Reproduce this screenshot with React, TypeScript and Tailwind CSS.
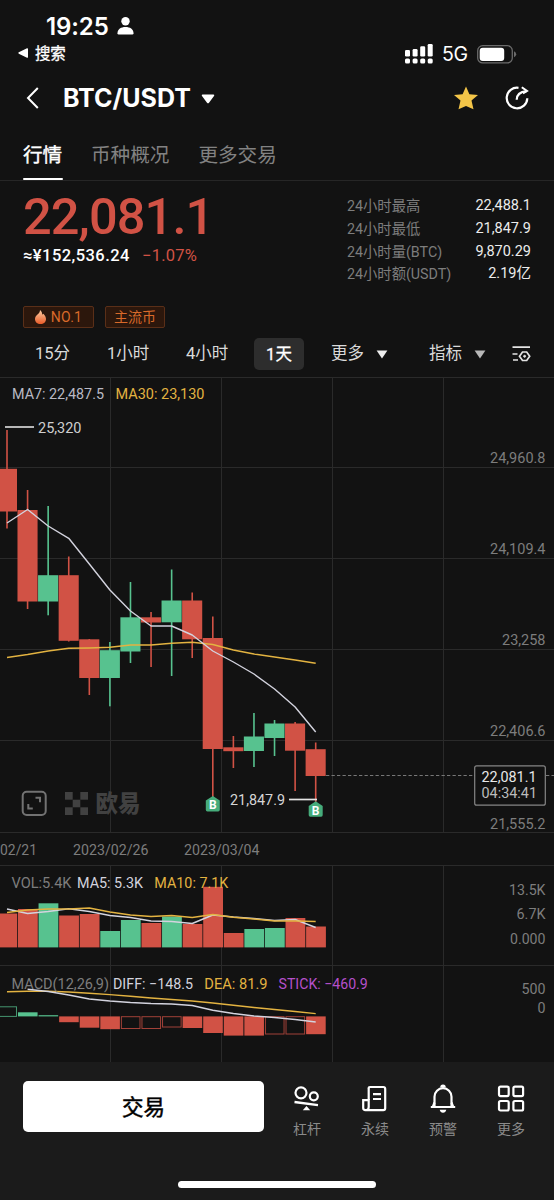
import React from "react";

const RED = "#d15245";
const GREEN = "#57c28f";
const YELLOW = "#e3b341";
const PALE = "#d3d3de";
const GRID = "#2a2a2a";
const GRID_X = [110.5, 221.5, 332.5, 443.5];

const centre = (i: number) => 7 + i * 20.58;

type Candle = [up: boolean, top: number, bottom: number, high: number, low: number];

const candles: Candle[] = [
  [false, 468.8, 511.5, 430, 528.5],
  [false, 510, 601.5, 490, 609],
  [true, 575.2, 601.5, 506, 615.3],
  [false, 575.2, 640.8, 556.5, 641.5],
  [false, 639.3, 678, 639, 695],
  [true, 650.2, 678, 642, 706.3],
  [true, 617.3, 651.5, 582, 663],
  [false, 617.3, 622.5, 612, 667],
  [true, 600.5, 622.3, 569.5, 676],
  [false, 600.5, 639.3, 592.5, 658],
  [false, 638, 749, 616.5, 797],
  [false, 747.3, 751.2, 736, 768],
  [true, 736.5, 751, 713, 767],
  [true, 723.5, 738, 720, 756],
  [false, 723.5, 750.7, 722, 791],
  [false, 749.2, 776, 742.5, 802],
];
const ma7 = [523, 509.5, 526, 538.3, 564, 590, 611, 626, 626, 635, 651, 662, 674, 689, 707, 732];
const ma30 = [657.5, 654.5, 651, 648.3, 648, 647.3, 645, 645, 643.3, 642.3, 644.5, 650, 654, 657, 660, 663.3];

const volumes = [913.5, 909, 903.3, 915.5, 914, 931, 920, 923, 916.5, 924, 886.8, 933, 929, 928, 918, 926.5];
const volMa5 = [909, 913.5, 911.5, 908.8, 911.5, 915.5, 917.5, 921, 921.5, 923.5, 915, 917, 918.5, 920.5, 919.5, 927.5];
const volMa10 = [912.5, 910, 909, 909, 908, 912, 915, 916.5, 915.5, 917.5, 914.5, 917.3, 919, 921, 921, 921.5];

type Stick = [end: number, hollow: boolean];
const sticks: Stick[] = [
  [1006.5, true], [1012.3, false], [1015.2, false], [1022.2, false],
  [1027.7, false], [1029.2, false], [1028.5, true], [1028.5, true],
  [1027, true], [1028, false], [1033, false], [1035.6, false],
  [1035.6, false], [1034, true], [1034, true], [1034.2, false],
];
const diff = [989.3, 991.5, 995, 999, 1001, 1002.5, 1003.5, 1004, 1005.5, 1010.3, 1013.5, 1016, 1017.5, 1019.5, 1022];
const dea = [991.7, 991.3, 991.3, 992, 993.2, 994.6, 996.2, 998, 999.5, 1001, 1003, 1005.3, 1007.5, 1009.5, 1011.5, 1013.6];

function Line({ ys, color, from = 0 }: { ys: number[]; color: string; from?: number }) {
  return (
    <polyline
      points={ys.map((y, i) => `${centre(i + from)},${y}`).join(" ")}
      fill="none"
      stroke={color}
      strokeWidth="1.4"
      strokeLinejoin="round"
    />
  );
}

function Label({ x, y, w, color = "#7d7d7d", size = 14.5, children }: {
  x: number; y: number; w: number; color?: string; size?: number; children: string;
}) {
  return (
    <text x={x} y={y} textLength={w} lengthAdjust="spacingAndGlyphs" fill={color} fontSize={size}>
      {children}
    </text>
  );
}

function Panel({ top, height, children }: { top: number; height: number; children: React.ReactNode }) {
  return (
    <svg className="block shrink-0" width="554" height={height} viewBox={`0 ${top} 554 ${height}`}>
      {children}
    </svg>
  );
}

function BuyMark({ x, y }: { x: number; y: number }) {
  return (
    <g>
      <path d={`M${x} ${y} l7 4.6 v9.2 q0 1.6 -1.6 1.6 h-10.8 q-1.6 0 -1.6 -1.6 v-9.2z`} fill="#46ac7b" />
      <text x={x} y={y + 13.3} textAnchor="middle" fill="#fff" fontSize="12" fontWeight="700">B</text>
    </g>
  );
}

function PriceChart() {
  return (
    <Panel top={377} height={456}>
      <g stroke={GRID}>
        {[377.5, 467.5, 558.5, 649.5, 740.5, 832.5].map((y) => <line key={y} x1="0" x2="554" y1={y} y2={y} />)}
        {GRID_X.map((x) => <line key={x} x1={x} x2={x} y1="377" y2="832" />)}
      </g>
      <rect x="22.7" y="791.7" width="23" height="23.3" rx="4" fill="none" stroke="#727272" strokeWidth="2" />
      <path d="M35.500 797.800h4.500v4.500M32.800 808.500h-4.500v-4.500" fill="none" stroke="#727272" strokeWidth="2" />
      <g fill="#414141">
        <rect x="65" y="792" width="7.7" height="7.7" />
        <rect x="80.3" y="792" width="7.7" height="7.7" />
        <rect x="72.7" y="799.7" width="7.6" height="7.6" />
        <rect x="65" y="807.3" width="7.7" height="7.7" />
        <rect x="80.3" y="807.3" width="7.7" height="7.7" />
        <text x="95.5" y="812" textLength="45" lengthAdjust="spacingAndGlyphs" fontSize="23.5" fontWeight="900">欧易</text>
      </g>
      <line x1="326" x2="554" y1="775.5" y2="775.5" stroke="#777" strokeDasharray="3.3 2.2" />
      {candles.map(([up, top, bottom, high, low], i) => (
        <g key={i} fill={up ? GREEN : RED}>
          <rect x={centre(i) - 0.8} y={high} width="1.6" height={low - high} />
          <rect x={centre(i) - 10.1} y={top} width="20.1" height={bottom - top} />
        </g>
      ))}
      <Line ys={ma30} color={YELLOW} />
      <Line ys={ma7} color={PALE} />
      <Label x={12} y={398.5} w={92} color="#b9b9c4">MA7: 22,487.5</Label>
      <Label x={115.5} y={398.5} w={89} color={YELLOW}>MA30: 23,130</Label>
      <line x1="5" x2="34" y1="427" y2="427" stroke="#d6d6d6" strokeWidth="1.7" />
      <Label x={38} y={432.6} w={43.5} color="#cfcfcf">25,320</Label>
      <Label x={230} y={805.3} w={55} color="#d6d6d6">21,847.9</Label>
      <line x1="289" x2="317" y1="799.5" y2="799.5" stroke="#e4e4e4" strokeWidth="1.7" />
      <BuyMark x={212.8} y={796} />
      <BuyMark x={315.7} y={801.3} />
      <Label x={490} y={463} w={55.5}>24,960.8</Label>
      <Label x={490} y={554.2} w={55.5}>24,109.4</Label>
      <Label x={502} y={645} w={43.5}>23,258</Label>
      <Label x={490} y={736.2} w={55.5}>22,406.6</Label>
      <Label x={490} y={828.5} w={55.5}>21,555.2</Label>
      <rect x="474.7" y="765.8" width="70.6" height="39.4" rx="2" fill="#121212" stroke="#858585" strokeWidth="1.2" />
      <Label x={481.5} y={782} w={55} color="#e8e8e8">22,081.1</Label>
      <Label x={481.5} y={798.4} w={55.5} color="#bcbcbc">04:34:41</Label>
    </Panel>
  );
}

function DateAxis() {
  return (
    <Panel top={833} height={32}>
      <Label x={0} y={855} w={37}>02/21</Label>
      <Label x={73} y={855} w={75.5}>2023/02/26</Label>
      <Label x={184} y={855} w={75.5}>2023/03/04</Label>
    </Panel>
  );
}

function VolumeChart() {
  return (
    <Panel top={865} height={100}>
      <g stroke={GRID}>
        <line x1="0" x2="554" y1="865.5" y2="865.5" />
        {GRID_X.map((x) => <line key={x} x1={x} x2={x} y1="865" y2="965" />)}
      </g>
      {volumes.map((y, i) => (
        <rect key={i} x={centre(i) - 9.6} y={y} width="19.8" height={947.4 - y} fill={candles[i][0] ? GREEN : RED} />
      ))}
      <Line ys={volMa5} color={PALE} />
      <Line ys={volMa10} color={YELLOW} />
      <Label x={11.5} y={887.6} w={60}>VOL:5.4K</Label>
      <Label x={77} y={887.6} w={66} color="#d3d3de">MA5: 5.3K</Label>
      <Label x={154.3} y={887.6} w={74} color={YELLOW}>MA10: 7.1K</Label>
      <Label x={509} y={894.5} w={36.5}>13.5K</Label>
      <Label x={516.5} y={919} w={29}>6.7K</Label>
      <Label x={510} y={943.6} w={35.5}>0.000</Label>
    </Panel>
  );
}

function MacdChart() {
  const base = 1016.4;
  return (
    <Panel top={965} height={97}>
      <g stroke={GRID}>
        <line x1="0" x2="554" y1="965.5" y2="965.5" />
        {GRID_X.map((x) => <line key={x} x1={x} x2={x} y1="965" y2="1062" />)}
      </g>
      {sticks.map(([end, hollow], i) => {
        const color = end < base ? GREEN : RED;
        const y = Math.min(end, base);
        const h = Math.abs(end - base);
        return hollow ? (
          <rect key={i} x={centre(i) - 9.1} y={y + 0.3} width="18.6" height={h - 0.3} fill="#121212" stroke={color} strokeOpacity="0.75" strokeWidth="1" />
        ) : (
          <rect key={i} x={centre(i) - 9.6} y={y} width="19.6" height={h} fill={color} />
        );
      })}
      <Line ys={dea} color={YELLOW} />
      <Line ys={diff} color={PALE} from={1} />
      <Label x={11.5} y={988.6} w={97.5}>MACD(12,26,9)</Label>
      <Label x={113} y={988.6} w={80} color="#d3d3de">DIFF: −148.5</Label>
      <Label x={204.3} y={988.6} w={63.2} color={YELLOW}>DEA: 81.9</Label>
      <Label x={278.5} y={988.6} w={89.3} color="#b650cb">STICK: −460.9</Label>
      <Label x={521.5} y={994.3} w={24}>500</Label>
      <Label x={537.5} y={1013.2} w={8}>0</Label>
    </Panel>
  );
}

function StatusBar() {
  return (
    <div className="flex h-[64px] shrink-0 justify-between pl-[18px] pr-[37px] font-['Inter','Noto_Sans_CJK_SC',sans-serif]">
      <div className="flex flex-col">
        <div className="flex h-[42px] items-end gap-[8px] pl-[28px]">
          <span className="w-[63px] text-[24px] font-semibold leading-[30px] tracking-[-0.1px]">19:25</span>
          <svg className="mb-[7px]" width="17" height="18" viewBox="0 0 17 18" fill="#fff">
            <circle cx="8.5" cy="4.2" r="4.2" />
            <path d="M.5 16.2C.5 12 4 10 8.500 10s8 2 8 6.200q0 1.300-1.200 1.300H1.700Q.5 17.500.5 16.200z" />
          </svg>
        </div>
        <div className="flex h-[22px] items-center gap-[6px]">
          <svg width="11" height="10" viewBox="0 0 11 10" fill="#fff"><path d="M.8 4.300 9 .2q1-.3 1 .8v8q0 1.100-1 .8L.8 5.700q-.9-.7 0-1.400z" /></svg>
          <span className="mt-[2px] text-[15.500px] leading-[22px] tracking-[-0.2px] [-webkit-text-stroke:0.3px]">搜索</span>
        </div>
      </div>
      <div className="flex h-[20px] items-center pt-[54px]">
        <svg width="28" height="20" viewBox="0 0 28 20" fill="#fff">
          <rect x="0" y="6" width="5" height="6.500" rx="1.300" />
          <rect x="7.600" y="5" width="5" height="7.500" rx="1.300" />
          <rect x="15.200" y="2.300" width="5" height="10.200" rx="1.300" />
          <rect x="22.700" y="0" width="5" height="12.500" rx="1.300" />
          <rect x="0" y="14.500" width="5" height="5" rx="1.600" />
          <rect x="7.600" y="14.500" width="5" height="5" rx="1.600" />
          <rect x="15.200" y="14.500" width="5" height="5" rx="1.600" />
          <rect x="22.700" y="14.500" width="5" height="5" rx="1.600" />
        </svg>
        <span className="ml-[9px] w-[27px] text-[19.500px] leading-[20px] tracking-[-0.3px]">5G</span>
        <svg className="ml-[8px] mt-[-34px] translate-y-[17px]" width="40" height="19" viewBox="0 0 40 19">
          <rect x=".7" y=".7" width="34.600" height="17.200" rx="5" fill="none" stroke="#6b6b6b" strokeWidth="1.300" />
          <rect x="2.700" y="2.700" width="24.500" height="13.200" rx="3" fill="#fff" />
          <path d="M37 6.300q2.200.9 2.200 3t-2.200 3z" fill="#6b6b6b" />
        </svg>
      </div>
    </div>
  );
}

function Header() {
  return (
    <header className="flex h-[68px] shrink-0 items-center pl-[26px] pr-[25px]">
      <svg width="13" height="22" viewBox="0 0 13 22" fill="none" stroke="#fff" strokeWidth="2"><path d="M11.800 1 2 11l9.800 10" /></svg>
      <h1 className="ml-[24px] w-[128px] whitespace-nowrap font-['Inter',sans-serif] text-[25px] font-bold leading-[30px] tracking-[0px]">BTC/USDT</h1>
      <svg className="ml-[10px] mt-[1px]" width="14" height="10" viewBox="0 0 14 10" fill="#fff"><path d="M1.500.5h11q1.400.2.500 1.400L8 8.700q-1 1.100-2 0L1 1.900Q.1.700 1.500.5z" /></svg>
      <svg className="ml-auto" width="24" height="24" viewBox="0 0 24 24" fill="#f3c548">
        <path d="M12 .5 15.400 8.200 24 9 17.500 14.600 19.500 23.200 12 20 4.500 23.200 6.500 14.600 0 9 8.600 8.200z" />
      </svg>
      <svg className="ml-[27px]" width="24" height="24" viewBox="0 0 24 24" fill="none" stroke="#fff" strokeWidth="2.200">
        <path d="M13.500 1.800A10.300 10.300 0 1 0 22.300 12.300" />
        <path d="M11.700 13.800C11.700 9 14.500 6 21.500 5.200" />
        <path d="M16.800 1.300 22 5 18 7.300" strokeWidth="2" />
      </svg>
    </header>
  );
}

function Tabs() {
  return (
    <nav className="flex h-[49px] shrink-0 gap-[29px] border-b border-[#262626] pl-[23px] text-[19.600px] text-[#828282]">
      <div className="flex h-[48px] flex-col justify-between">
        <span className="mt-[10px] leading-[28px] text-white [-webkit-text-stroke:0.4px]">行情</span>
        <span className="h-[2.500px] w-[40px] rounded-[1px] bg-white" />
      </div>
      <span className="ml-[-1px] mt-[10px] leading-[28px]">币种概况</span>
      <span className="mt-[10px] leading-[28px]">更多交易</span>
    </nav>
  );
}

const stats = [
  ["24小时最高", "22,488.1"],
  ["24小时最低", "21,847.9"],
  ["24小时量(BTC)", "9,870.29"],
  ["24小时额(USDT)", "2.19亿"],
];

function Summary() {
  return (
    <section className="flex h-[125px] shrink-0 justify-between pl-[23px] pr-[23px] pt-[11px]">
      <div>
        <div className="h-[52px] text-[50.500px] font-medium leading-[49px] tracking-[-0.9px] text-[#d15245]">22,081.1</div>
        <div className="flex h-[24px] items-center gap-[12px] text-[16.500px] leading-[24px]">
          <span className="w-[107px] whitespace-nowrap font-medium tracking-[0.450px]">≈¥152,536.24</span>
          <span className="tracking-[0.250px] text-[#d15245]">−1.07%</span>
        </div>
      </div>
      <dl className="mt-[3px] flex w-[184px] flex-col text-[14.300px]">
        {stats.map(([name, value]) => (
          <div key={name} className="flex h-[22.700px] items-center justify-between leading-[22px]">
            <dt className="text-[#7d7d7d]">{name}</dt>
            <dd className="text-[14.500px] text-[#ececec]">{value}</dd>
          </div>
        ))}
      </dl>
    </section>
  );
}

function Tags() {
  return (
    <div className="flex h-[22px] shrink-0 gap-[11px] pl-[23px] text-[14px] text-[#d96a2a]">
      <span className="flex w-[71px] items-center justify-center gap-[5px] rounded-[2px] border border-[#5a2f18] bg-[#2c170c]">
        <svg width="11" height="14" viewBox="0 0 11 14">
          <defs>
            <linearGradient id="flame" x1="0" y1="0" x2="0" y2="1"><stop offset="0" stopColor="#ffd0a5" /><stop offset="1" stopColor="#e95b28" /></linearGradient>
          </defs>
          <path d="M5 0C7 1.500 7.200 3.500 7.300 4.800L8.300 3.700C10 5.500 11 7 11 9c0 3-2.300 5-5.500 5S0 12 0 9c0-2 1-3.200 2.500-4.500C4.200 3 5 2 5 0z" fill="url(#flame)" />
        </svg>
        <span className="leading-[20px] tracking-[0.200px]">NO.1</span>
      </span>
      <span className="flex w-[60px] items-center justify-center rounded-[2px] border border-[#5a2f18] bg-[#2c170c] leading-[20px]">主流币</span>
    </div>
  );
}

function Caret({ className, color }: { className: string; color: string }) {
  return <svg className={className} width="12" height="9" viewBox="0 0 12 9" fill={color}><path d="M.6.6h10.800L6 8.400z" /></svg>;
}

function Intervals() {
  return (
    <div className="flex h-[49px] shrink-0 items-center pt-[3px] text-[16.500px] leading-[24px] text-[#dadada]">
      <span className="ml-[35px] w-[72px]">15分</span>
      <span className="w-[79px]">1小时</span>
      <span className="w-[68px]">4小时</span>
      <span className="mt-[-1px] flex h-[32px] w-[50px] items-center justify-center rounded-[5px] bg-[#2d2d2d] pt-[2px] text-white [-webkit-text-stroke:0.3px]">1天</span>
      <span className="ml-[27px] w-[33px]">更多</span>
      <Caret className="ml-[12px] mt-[1px]" color="#eeeeee" />
      <span className="ml-[41px] w-[34px]">指标</span>
      <Caret className="ml-[11px] mt-[1px]" color="#b8b8b8" />
      <svg className="ml-[26px]" width="19" height="16" viewBox="0 0 19 16" fill="none" stroke="#e4e4e4" strokeWidth="1.700">
        <path d="M.5 1.200h17.500M.5 8h5M1 14h5" />
        <path d="M10.500 6h4.200l3 4.300-3 4.200h-4.200l-3-4.200z" />
        <circle cx="12.600" cy="10.300" r="1" fill="#e4e4e4" strokeWidth="1" />
      </svg>
    </div>
  );
}

const actions = [
  {
    name: "杠杆",
    icon: (
      <>
        <circle cx="8" cy="8.800" r="5.500" />
        <circle cx="20.800" cy="12.300" r="4" />
        <path d="M1.500 18 25 21.200" strokeWidth="2.300" />
        <path d="M13.500 22 17.200 26.300h-7.400z" fill="#fff" stroke="none" />
      </>
    ),
  },
  {
    name: "永续",
    icon: (
      <>
        <path d="M7.700 4.300q0-1.300 1.300-1.300h13.300q1.900 0 1.900 1.900v19.300q0 1.900-1.900 1.900H4.400q-2.200 0-2.200-2.200v-7.800h5.500V23q0 3-2.500 3" />
        <path d="M7.700 16V4M12 10.200h8M12 15h8" />
      </>
    ),
  },
  {
    name: "预警",
    icon: (
      <>
        <path d="M5.500 22.500V12.700a8.500 8.500 0 0 1 17 0v9.800" />
        <path d="M1.800 23h24.400M4 22.500l1.500-4M24 22.500l-1.500-4" />
        <path d="M11.200 3.600q0-3 2.800-3t2.800 3zM10.700 25.700h6.600q-.7 3-3.300 3t-3.300-3z" fill="#fff" stroke="none" />
      </>
    ),
  },
  {
    name: "更多",
    icon: (
      <>
        <rect x="2" y="2.600" width="9.700" height="9.500" rx="1.500" />
        <rect x="16.400" y="2.600" width="9.700" height="9.500" rx="1.500" />
        <rect x="2" y="17" width="9.700" height="9.500" rx="1.500" />
        <rect x="16.400" y="17" width="9.700" height="9.500" rx="1.500" />
      </>
    ),
  },
];

function BottomBar() {
  return (
    <footer className="flex h-[138px] shrink-0 flex-col items-center bg-[#1b1b1b]">
      <div className="flex w-full pl-[23px] pt-[19px]">
        <button className="h-[51px] w-[241px] rounded-[5px] bg-white pt-[3px] text-[21.500px] text-black [-webkit-text-stroke:0.5px]">交易</button>
        <div className="ml-[9px] flex">
          {actions.map((a) => (
            <div key={a.name} className="flex w-[68px] flex-col items-center">
              <svg className="mt-[3px] overflow-visible" width="28" height="28" viewBox="0 0 28 28" fill="none" stroke="#fff" strokeWidth="2.200">{a.icon}</svg>
              <span className="mt-[6px] text-[14px] leading-[22px] text-[#8a8a8a]">{a.name}</span>
            </div>
          ))}
        </div>
      </div>
      <div className="mb-[12px] mt-auto h-[7px] w-[198px] rounded-full bg-white" />
    </footer>
  );
}

export default function App() {
  return (
    <div className="flex h-[1200px] w-[554px] flex-col overflow-hidden bg-[#121212] font-['Roboto','Noto_Sans_CJK_SC',sans-serif] text-white">
      <StatusBar />
      <Header />
      <Tabs />
      <Summary />
      <Tags />
      <Intervals />
      <PriceChart />
      <DateAxis />
      <VolumeChart />
      <MacdChart />
      <BottomBar />
    </div>
  );
}
